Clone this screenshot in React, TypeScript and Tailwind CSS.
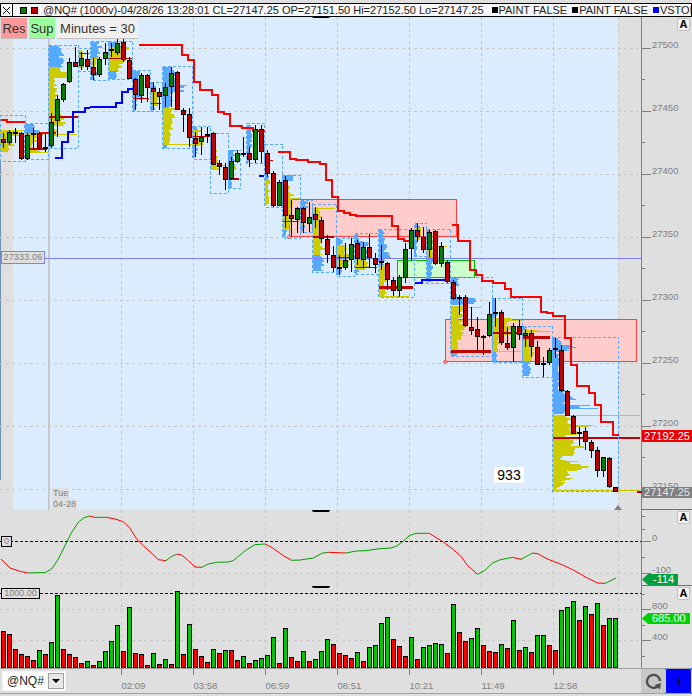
import { Fragment } from "react";

const RED = "#c00000";
const GREEN = "#008000";
const YELLOW = "#cccc00";
const BLUE = "#55aaff";

type Candle = [string, number, number, number, number];

// body top, body bottom, wick top, wick bottom, read off the chart
const rawA: Candle[] = [
  ["r", 417, 427, 400, 445], ["g", 397, 427, 390, 435], ["d", 398, 398, 385, 430], ["r", 400, 475, 395, 480],
  ["g", 405, 475, 400, 480], ["d", 402, 402, 385, 450], ["r", 400, 442, 395, 450], ["d", 445, 445, 400, 455],
  ["g", 365, 433, 340, 445], ["g", 298, 362, 285, 410], ["g", 253, 298, 250, 305], ["g", 187, 245, 175, 250],
  ["r", 187, 198, 140, 200], ["g", 175, 197, 155, 210], ["r", 178, 200, 150, 210], ["r", 202, 224, 175, 240],
  ["g", 178, 224, 170, 230], ["g", 157, 176, 130, 195], ["d", 150, 150, 130, 170], ["g", 130, 157, 118, 165],
  ["r", 127, 178, 118, 185], ["r", 181, 235, 170, 238], ["r", 238, 283, 235, 330], ["g", 226, 286, 220, 310],
  ["r", 226, 262, 222, 305], ["r", 265, 274, 245, 330], ["r", 277, 289, 265, 330], ["g", 262, 287, 250, 320],
  ["g", 220, 260, 200, 320], ["r", 217, 327, 212, 330], ["r", 331, 342, 325, 395], ["r", 343, 412, 325, 440],
  ["r", 415, 430, 395, 470], ["g", 412, 425, 380, 465], ["d", 405, 405, 380, 430], ["r", 400, 493, 395, 495],
  ["r", 490, 498, 480, 525], ["r", 500, 535, 490, 570], ["g", 483, 535, 470, 540], ["g", 460, 483, 450, 490],
  ["d", 462, 462, 410, 470], ["r", 460, 478, 440, 500], ["g", 388, 478, 375, 490], ["r", 388, 455, 375, 490],
  ["r", 460, 519, 450, 530],
];
const rawB: Candle[] = [
  ["r", 10, 105, 4, 110], ["g", 35, 105, 30, 108], ["r", 30, 134, 18, 175], ["r", 136, 146, 90, 200],
  ["g", 115, 147, 110, 190], ["r", 115, 158, 110, 188], ["g", 142, 161, 95, 185], ["r", 133, 149, 110, 175],
  ["r", 151, 206, 140, 218], ["r", 208, 254, 195, 280], ["r", 254, 290, 228, 305], ["d", 293, 293, 255, 315],
  ["g", 271, 293, 220, 300], ["g", 223, 268, 205, 305], ["r", 220, 265, 210, 285], ["g", 232, 268, 215, 295],
  ["r", 232, 262, 192, 295], ["r", 265, 284, 250, 310], ["d", 277, 277, 225, 300], ["r", 280, 328, 275, 360],
  ["r", 331, 361, 320, 378], ["g", 322, 361, 315, 380], ["g", 238, 323, 220, 340], ["g", 181, 235, 175, 270],
  ["r", 181, 199, 160, 215], ["r", 202, 238, 170, 250], ["g", 187, 238, 180, 262], ["r", 184, 281, 180, 285],
  ["g", 229, 281, 215, 290],
];
const rawC: Candle[] = [
  ["r", -23, 35, -30, 38], ["r", 37, 86, 30, 90], ["d", 84, 84, 75, 135], ["r", 82, 166, 75, 170],
  ["r", 170, 178, 110, 195], ["r", 178, 200, 140, 245], ["d", 200, 200, 195, 255], ["g", 133, 196, 95, 200],
  ["d", 128, 128, 85, 170], ["r", 127, 217, 120, 225], ["r", 220, 233, 170, 240], ["g", 169, 233, 160, 275],
  ["r", 169, 193, 150, 210], ["g", 190, 197, 180, 230], ["r", 190, 230, 180, 260], ["r", 232, 283, 212, 285],
  ["d", 281, 281, 260, 320], ["g", 241, 277, 235, 285], ["d", 236, 236, 205, 265], ["r", 241, 360, 225, 365],
  ["r", 364, 436, 360, 438], ["r", 439, 490, 435, 492], ["d", 488, 488, 470, 527], ["r", 484, 514, 470, 540],
  ["r", 517, 541, 510, 565], ["r", 541, 601, 530, 620], ["g", 562, 601, 560, 622], ["r", 565, 650, 562, 655],
  ["r", 652, 664, 650, 665],
];
const conv = (list: Candle[], o: number): Candle[] =>
  list.map(([t, a, b, c, d]) => [t, o + a / 3, o + b / 3, o + c / 3, o + d / 3]);
const candles = [...conv(rawA, 0), ...conv(rawB, 170), ...conv(rawC, 270)];

const stopsRed = [
  "1,119.5 7,119.5 7,121.7 25,121.7",
  "139,44.7 182,44.7 182,55 187.5,55 187.5,60 193.5,60 193.5,82 199.5,82 199.5,90 212,90 212,95 217.5,95 217.5,112 223.5,112 223.5,113.5 229.5,113.5 229.5,126 241.5,126 241.5,127.5 253,127.5 253,131 265,131",
  "277.5,152 289.5,152 289.5,158.7 295.5,158.7 295.5,160 307.5,160 307.5,161.7 319.5,161.7 319.5,163.5 325.5,163.5 325.5,180 331.5,180 331.5,196.7 337.5,196.7 337.5,211 343.5,211 343.5,212.7 349.5,212.7 349.5,214.7 355.5,214.7 355.5,216 391.5,216 391.5,226 397.5,226 397.5,238.7 403.5,238.7 403.5,240.7 409,240.7",
  "451.5,224.7 457.5,224.7 457.5,240.7 469.5,240.7 469.5,270 475.5,270 475.5,275 481.5,275 481.5,280.7 493,280.7 493,282.7 505,282.7 505,288.7 511,288.7 511,296.7 541,296.7 541,311.7 547,311.7 547,313.3 553,313.3 553,316 565,316 565,338.3 571,338.3 571,365 577,365 577,385.7 589,385.7 589,392.7 595,392.7 595,404.7 601,404.7 601,422 613,422 613,435 619,435",
];
const stopsBlue = [
  "55,157.7 61.7,157.7 61.7,141.7 67.7,141.7 67.7,132 73.3,132 73.3,112 85.3,112 85.3,107.7 109.3,106.7 115.7,106.7 115.7,103.3 121.7,102.7 121.7,92 127.7,92 127.7,89.3 133.3,89.3",
  "259.3,175.7 264,175.7",
  "415,282.7 421.7,282.7 421.7,279.7 445,279.7",
];

type Row = [number, number, number, number, string];
type Session = {
  x: number; w: number; t: number; b: number;
  rows: Row[];
  lines?: [number, number, string, number][];
};
const sessions: Session[] = [
  { x: 0, w: 25, t: 115, b: 161, rows: [[130, 136, 20, 22, YELLOW], [136, 146, 10, 20, YELLOW], [146, 152, 8, 12, YELLOW]], lines: [[130, 24, YELLOW, 1]] },
  { x: 24.5, w: 24, t: 123, b: 159, rows: [[124, 134, 10, 18, BLUE], [134, 146, 20, 8, YELLOW], [146, 153, 10, 20, YELLOW]], lines: [[149, 22, RED, 2], [152, 23, YELLOW, 1]] },
  { x: 48.5, w: 30, t: 45, b: 148, rows: [[46, 67, 14, 18, BLUE], [67, 72, 15, 20, YELLOW], [72, 78, 24, 26, YELLOW], [78, 112, 8, 14, YELLOW], [112, 126, 12, 24, YELLOW], [126, 136, 6, 14, YELLOW], [136, 147, 5, 6, BLUE]], lines: [[117, 29, RED, 2], [134, 28, YELLOW, 1]] },
  { x: 78.5, w: 12, t: 48, b: 71, rows: [[50, 68, 6, 7, YELLOW]], lines: [[53, 10, RED, 1]] },
  { x: 90.5, w: 18, t: 41, b: 80, rows: [[42, 58, 12, 9, BLUE], [58, 72, 10, 6, YELLOW], [72, 80, 8, 4, BLUE]] },
  { x: 108.5, w: 24, t: 41, b: 79, rows: [[42, 47, 8, 14, BLUE], [47, 71, 22, 16, YELLOW], [71, 79, 14, 8, BLUE]], lines: [[58, 23, RED, 1]] },
  { x: 132.5, w: 18, t: 70, b: 111, rows: [[71, 97, 8, 11, BLUE], [97, 100, 14, 14, YELLOW], [100, 111, 6, 3, BLUE]], lines: [[98, 16, RED, 1]] },
  { x: 150.5, w: 12, t: 82, b: 111, rows: [[83, 92, 5, 6, BLUE], [92, 106, 10, 11, YELLOW], [106, 111, 6, 3, BLUE]], lines: [[103, 10, RED, 1]] },
  { x: 162.5, w: 30, t: 66, b: 148, rows: [[67, 85, 14, 18, BLUE], [85, 92, 26, 26, BLUE], [92, 108, 12, 10, BLUE], [108, 116, 14, 16, YELLOW], [116, 144, 15, 7, YELLOW], [144, 148, 5, 5, BLUE]], lines: [[144, 30, YELLOW, 1]] },
  { x: 192.5, w: 18, t: 126, b: 159, rows: [[127, 130, 6, 8, BLUE], [130, 145, 10, 12, YELLOW], [145, 158, 7, 3, BLUE]], lines: [[136, 17, RED, 1]] },
  { x: 210.5, w: 18, t: 133, b: 193, rows: [[140, 150, 2, 3, BLUE], [150, 170, 7, 10, YELLOW]], lines: [[165, 16, YELLOW, 1]] },
  { x: 228.5, w: 12, t: 150, b: 188, rows: [[150, 165, 6, 8, BLUE], [165, 180, 8, 6, YELLOW], [180, 188, 5, 3, BLUE]], lines: [[179, 10, RED, 2]] },
  { x: 246.5, w: 18, t: 123, b: 163, rows: [[125, 140, 6, 8, BLUE], [140, 155, 6, 4, BLUE], [155, 163, 4, 3, BLUE]] },
  { x: 264.5, w: 18, t: 144, b: 207, rows: [[170, 180, 4, 6, BLUE], [180, 205, 6, 5, YELLOW]], lines: [[160, 8, RED, 1]] },
  { x: 282.5, w: 18, t: 175, b: 238, rows: [[175, 181, 15, 15, BLUE], [181, 199, 8, 12, YELLOW], [199, 230, 12, 10, YELLOW], [230, 237, 5, 4, BLUE]], lines: [[221, 16, RED, 1], [198, 17, YELLOW, 1]] },
  { x: 300.5, w: 12, t: 200, b: 232.5, rows: [[201, 210, 9, 7, BLUE], [210, 225, 4, 4, YELLOW], [225, 232, 5, 3, BLUE]] },
  { x: 312.5, w: 24, t: 204, b: 272, rows: [[209, 255, 8, 14, YELLOW], [255, 271, 10, 14, BLUE]], lines: [[208, 22, YELLOW, 1], [237, 21, RED, 2]] },
  { x: 336.5, w: 18, t: 238, b: 276, rows: [[239, 245, 8, 6, BLUE], [245, 267, 14, 12, YELLOW], [267, 275, 8, 6, BLUE]], lines: [[257, 16, RED, 1]] },
  { x: 354.5, w: 24, t: 233, b: 274, rows: [[234, 241, 5, 8, BLUE], [241, 258, 14, 16, BLUE], [258, 270, 16, 18, YELLOW], [270, 274, 5, 4, BLUE]], lines: [[267, 22, RED, 1]] },
  { x: 378.5, w: 36, t: 229, b: 297, rows: [[230, 252, 7, 9, BLUE], [252, 258, 12, 24, BLUE], [258, 265, 8, 6, BLUE], [265, 296, 12, 8, YELLOW]], lines: [[287, 34, RED, 3], [296, 30, YELLOW, 1]] },
  { x: 414.5, w: 12, t: 223, b: 256, rows: [[224, 228, 6, 8, BLUE], [228, 240, 8, 7, YELLOW], [240, 256, 3, 3, BLUE]] },
  { x: 426.5, w: 24, t: 229, b: 283, rows: [[230, 240, 5, 6, BLUE], [240, 257, 8, 10, YELLOW], [257, 282, 9, 6, BLUE]], lines: [[246, 20, YELLOW, 1]] },
  { x: 450.5, w: 42, t: 277, b: 356, rows: [[278, 286, 8, 12, BLUE], [286, 298, 6, 8, BLUE], [298, 305, 27, 26, BLUE], [306, 325, 14, 14, YELLOW], [325, 335, 20, 12, YELLOW], [335, 350, 14, 7, YELLOW], [351, 356, 12, 8, BLUE]], lines: [[307, 30, YELLOW, 1], [351, 40, RED, 3]] },
  { x: 492.5, w: 30, t: 298, b: 362, rows: [[299, 318, 3, 6, BLUE], [318, 335, 20, 26, YELLOW], [335, 351, 10, 6, YELLOW], [352, 362, 5, 4, BLUE]], lines: [[320, 29, YELLOW, 1], [333, 26, RED, 2], [351, 28, YELLOW, 1]] },
  { x: 522.5, w: 30, t: 326, b: 377, rows: [[327, 330, 5, 8, BLUE], [330, 361, 16, 12, YELLOW], [361, 376, 9, 8, BLUE]], lines: [[331, 28, YELLOW, 1], [337, 27, RED, 3]] },
  { x: 552.5, w: 66, t: 337, b: 491, rows: [
    [338, 345, 8, 10, BLUE], [345, 348, 22, 36, BLUE], [348, 351, 30, 12, BLUE], [351, 390, 7, 9, BLUE], [390, 400, 14, 30, BLUE], [400, 405, 18, 12, BLUE], [405, 409, 40, 50, BLUE], [409, 414, 18, 10, BLUE],
    [415, 425, 22, 26, YELLOW], [425, 427, 45, 45, YELLOW], [427, 433, 26, 32, YELLOW], [433, 435, 38, 38, YELLOW], [435, 446, 22, 22, YELLOW], [446, 448, 42, 42, YELLOW], [448, 456, 32, 28, YELLOW], [456, 461, 12, 16, YELLOW], [461, 466, 28, 32, YELLOW], [466, 471, 46, 40, YELLOW], [471, 478, 24, 20, YELLOW], [478, 481, 26, 14, YELLOW], [481, 487, 14, 8, YELLOW], [487, 491, 6, 4, YELLOW],
  ], lines: [[415.5, 87, YELLOW, 1], [438, 87, RED, 1.5], [490, 87, YELLOW, 1]] },
];

const volumeRaw: [number, string][] = [
  [400, "r"], [409, "r"], [454, "r"], [469, "r"], [475, "r"], [487, "r"], [457, "g"], [469, "r"], [433, "g"], [292, "g"],
  [454, "r"], [469, "r"], [478, "r"], [496, "r"], [490, "g"], [502, "r"], [490, "g"], [460, "g"], [430, "g"], [382, "g"],
  [460, "r"], [328, "g"], [466, "r"], [469, "r"], [502, "r"], [466, "g"], [499, "r"], [484, "g"], [499, "r"], [278, "g"],
  [469, "r"], [379, "g"], [454, "r"], [475, "r"], [493, "r"], [454, "g"], [466, "r"], [457, "g"], [457, "r"], [487, "r"],
  [475, "g"], [496, "r"], [487, "g"], [481, "g"], [472, "g"], [418, "g"], [496, "r"], [391, "g"], [478, "r"], [490, "r"],
  [460, "g"], [490, "r"], [484, "g"], [460, "g"], [424, "g"], [439, "r"], [466, "r"], [472, "r"], [481, "r"], [463, "g"],
  [490, "r"], [448, "g"], [442, "g"], [376, "g"], [358, "g"], [424, "r"], [445, "r"], [475, "r"], [418, "g"], [484, "r"],
  [448, "g"], [442, "g"], [436, "g"], [439, "g"], [466, "r"], [319, "g"], [403, "r"], [430, "r"], [421, "g"], [391, "g"],
  [442, "r"], [460, "r"], [463, "r"], [439, "g"], [451, "r"], [367, "g"], [457, "r"], [448, "g"], [463, "r"], [412, "g"],
  [412, "g"], [442, "r"], [457, "r"], [337, "g"], [328, "g"], [310, "g"], [367, "r"], [325, "g"], [349, "r"], [316, "g"],
  [382, "r"], [361, "g"], [361, "g"],
];

const curveA = [[3, 180], [30, 207], [60, 217], [85, 222], [110, 221], [135, 221], [155, 210], [175, 180], [195, 140], [215, 100], [235, 70], [250, 57], [268, 51], [285, 55], [320, 55], [345, 60], [370, 68], [390, 88], [410, 120], [430, 140], [450, 158], [475, 182], [498, 185], [515, 172], [530, 166], [545, 168], [565, 185], [585, 204], [605, 205], [625, 195], [650, 190], [685, 189], [700, 185], [720, 168], [740, 152], [765, 137], [795, 135], [815, 145], [850, 170], [875, 184], [900, 183], [940, 177], [965, 163], [985, 160], [1038, 162]];
const curveB = [[30, 156], [60, 155], [100, 149], [135, 147], [150, 142], [170, 128], [190, 110], [210, 103], [250, 103], [290, 128], [320, 150], [345, 172], [365, 200], [395, 226], [415, 215], [440, 192], [460, 183], [500, 175], [525, 181], [545, 170], [560, 162], [575, 164], [600, 178], [630, 190], [650, 198], [680, 212], [720, 235], [755, 252], [778, 253], [810, 237]];
const curve = [...curveA.map(([x, y]) => [x / 3, 500 + y / 3]), ...curveB.map(([x, y]) => [346 + x / 3, 500 + y / 3])];

const gridX = [121.5, 193.5, 265.5, 337.5, 409.5, 481.5, 553.5, 618.5];
const times = ["02:09", "03:58", "06:59", "08:51", "10:21", "11:49", "12:58"];
const priceLevels: [number, string][] = [[48, "27500"], [111, "27450"], [174, "27400"], [237, "27350"], [300, "27300"], [363, "27250"], [426, "27200"], [489, "27150"]];

function GridV({ top, bottom }: { top: number; bottom: number }) {
  return (
    <>
      {gridX.map((x) => (
        <line key={x} x1={x} x2={x} y1={top} y2={bottom} stroke="#c8c8c8" strokeDasharray="3 3" />
      ))}
    </>
  );
}

function Profile({ s }: { s: Session }) {
  const bars: { y: number; w: number; c: string }[] = [];
  s.rows.forEach(([y0, y1, w0, w1, c]) => {
    for (let y = Math.round(y0); y < y1; y++) {
      const f = (y - y0) / Math.max(1, y1 - y0);
      // rough spikes so a profile doesn't read as a smooth wedge
      const n = Math.abs(Math.sin(Math.floor(y / 2) * 12.9898 + s.x) * 437.5453) % 1;
      bars.push({ y, w: (w0 + (w1 - w0) * f) * (0.55 + 0.45 * n), c });
    }
  });
  return (
    <g shapeRendering="crispEdges">
      {bars.map((b) => (
        <rect key={b.y} x={s.x} y={b.y} width={b.w} height={1} fill={b.c} />
      ))}
      {s.lines?.map(([y, len, c, h], i) => (
        <rect key={i} x={s.x} y={y - h / 2} width={len} height={h} fill={c} />
      ))}
      <rect x={s.x} y={s.t} width={s.w} height={s.b - s.t} fill="none" stroke={BLUE} strokeDasharray="3 2" />
    </g>
  );
}

function Candles() {
  return (
    <g shapeRendering="crispEdges">
      {candles.map(([t, top, bot, wt, wb], k) => {
        const cx = 3.5 + 6 * k;
        return (
          <Fragment key={k}>
            <line x1={cx} x2={cx} y1={wt} y2={wb} stroke="#000" />
            {t === "d" ? (
              <rect x={cx - 2.5} y={top - 1} width={5} height={2} fill="#000" />
            ) : (
              <rect x={cx - 2} y={Math.round(top) + 0.5} width={4} height={Math.max(1, Math.round(bot - top))} fill={t === "r" ? RED : GREEN} stroke="#000" />
            )}
          </Fragment>
        );
      })}
    </g>
  );
}

function PriceChart() {
  return (
    <svg width={641} height={493} viewBox="0 17 641 493" className="block">
      <rect x={0} y={17} width={641} height={493} fill="#dbecff" />
      <rect x={0} y={17} width={13} height={493} fill="#dfdfdf" />
      <rect x={618} y={17} width={23} height={493} fill="#dfdfdf" />
      <rect x={0} y={160} width={1} height={320} fill="#6f8fb8" />
      <GridV top={17} bottom={510} />
      {priceLevels.map(([y]) => (
        <line key={y} x1={0} x2={641} y1={y + 0.5} y2={y + 0.5} stroke="#c8c8c8" strokeDasharray="3 3" />
      ))}
      <rect x={48} y={38} width={2} height={472} fill="#c8c8c8" />
      <rect x={289.5} y={199.5} width={167} height={37} fill="#ffcccc" stroke="#ff4040" />
      <rect x={445.5} y={319.5} width={191} height={42} fill="#ffcccc" stroke="#ff4040" />
      <rect x={397.5} y={260.5} width={77} height={17} fill="#ccffcc" stroke="#00c000" />
      <circle cx={289} cy={237} r={1.5} fill="#ffcccc" stroke="#ff4040" />
      <circle cx={445} cy={362} r={1.5} fill="#ffcccc" stroke="#ff4040" />
      {sessions.map((s) => (
        <Profile key={s.x} s={s} />
      ))}
      <rect x={39} y={132} width={17} height={2} fill="#ff0000" />
      <line x1={0} x2={641} y1={258.5} y2={258.5} stroke="#8080ff" />
      {stopsRed.map((p, i) => (
        <polyline key={i} points={p} fill="none" stroke="#ff0000" strokeWidth={2} shapeRendering="crispEdges" />
      ))}
      {stopsBlue.map((p, i) => (
        <polyline key={i} points={p} fill="none" stroke="#0000ff" strokeWidth={2} shapeRendering="crispEdges" />
      ))}
      <Candles />
      <polygon points="614,510 618,505 622,510" fill="#808080" />
    </svg>
  );
}

function IndicatorChart() {
  const segs = curve.slice(1).map((p, i) => ({ a: curve[i], b: p }));
  return (
    <svg width={641} height={76} viewBox="0 511 641 76" className="block">
      <rect x={0} y={511} width={641} height={76} fill="#dfdfdf" />
      <GridV top={511} bottom={587} />
      <line x1={0} x2={641} y1={574.5} y2={574.5} stroke="#c8c8c8" strokeDasharray="3 3" />
      <line x1={0} x2={641} y1={542.5} y2={542.5} stroke="#000" strokeDasharray="3 2" />
      {segs.map(({ a, b }, i) => (
        <line key={i} x1={a[0]} y1={a[1]} x2={b[0]} y2={b[1]} stroke={b[1] <= a[1] ? "#00a000" : "#ff0000"} />
      ))}
    </svg>
  );
}

function VolumeChart() {
  return (
    <svg width={641} height={82} viewBox="0 588 641 82" className="block">
      <rect x={0} y={588} width={641} height={82} fill="#dfdfdf" />
      <GridV top={588} bottom={670} />
      <line x1={0} x2={641} y1={611.5} y2={611.5} stroke="#c8c8c8" strokeDasharray="3 3" />
      <line x1={0} x2={641} y1={642.5} y2={642.5} stroke="#c8c8c8" strokeDasharray="3 3" />
      <line x1={0} x2={641} y1={595.5} y2={595.5} stroke="#000" strokeDasharray="3 2" />
      <g shapeRendering="crispEdges">
        {volumeRaw.map(([z, c], k) => {
          const top = Math.round(500 + z / 3);
          return <rect key={k} x={1.5 + 6 * k} y={top + 0.5} width={4} height={669 - top} fill={c === "r" ? "#ff0000" : "#00c800"} stroke="#000" />;
        })}
      </g>
    </svg>
  );
}

function AxisLabels({ top, height, major, minor, labels }: { top: number; height: number; major: number[]; minor: number[]; labels: [number, string][] }) {
  return (
    <svg width={51} height={height} viewBox={`641 ${top} 51 ${height}`} className="block">
      <line x1={641.5} x2={641.5} y1={top} y2={top + height} stroke="#808080" />
      {major.map((y) => (
        <line key={y} x1={641} x2={651} y1={y + 0.5} y2={y + 0.5} stroke="#808080" />
      ))}
      {minor.map((y) => (
        <line key={y} x1={641} x2={645} y1={y + 0.5} y2={y + 0.5} stroke="#808080" />
      ))}
      {labels.map(([y, t]) => (
        <text key={t} x={652} y={y} fontSize={9.5} fill="#808080">{t}</text>
      ))}
    </svg>
  );
}

function AutoButton() {
  return (
    <div className="absolute right-[2px] top-[1px] flex h-[13px] w-[13px] items-center justify-center rounded-[2px] border border-[#c0c0c0] bg-[#f4f4f4] text-[11px] leading-none font-bold text-black">
      A
    </div>
  );
}

function TopMark({ top }: { top: string }) {
  return <div className={`absolute left-[312px] h-[2px] w-[18px] rounded-b-sm bg-black ${top}`} />;
}

export default function App() {
  return (
    <div className="relative flex h-[696px] w-[692px] flex-col overflow-hidden bg-[#dfdfdf] [font-family:'Liberation_Sans',sans-serif]">
      {/* title bar */}
      <div className="flex h-[17px] flex-col justify-end bg-[#dfdfdf]">
        <div className="flex h-[14px] items-center gap-[4px] overflow-hidden whitespace-nowrap border-x border-y border-black bg-[#f7f7f7] text-[11px] leading-none text-[#222]">
          <div className="flex h-[12px] w-[12px] shrink-0 items-center justify-center border-r border-black">
            <svg width="9" height="9" viewBox="0 0 9 9"><path d="M1 1 8 8M8 1 1 8" stroke="#000" strokeWidth="1" /></svg>
          </div>
          <span className="ml-[3px] h-[7px] w-[7px] shrink-0 border border-black bg-[#008000]" />
          <span className="h-[7px] w-[7px] shrink-0 border border-black bg-[#c00000]" />
          <span className="ml-[1px] shrink-0">@NQ# (1000v)-04/28/26 13:28:01 CL=27147.25 OP=27151.50 Hi=27152.50 Lo=27147.25</span>
          <span className="ml-[4px] flex shrink-0 items-center"><i className="mr-[1px] h-[6px] w-[6px] bg-black" />PAINT FALSE</span>
          <span className="ml-[1px] flex shrink-0 items-center"><i className="mr-[1px] h-[6px] w-[6px] bg-black" />PAINT FALSE</span>
          <span className="ml-[1px] flex shrink-0 items-center"><i className="mr-[1px] h-[6px] w-[6px] bg-[#0000ff]" />VSTOP=</span>
        </div>
      </div>

      {/* price pane */}
      <div className="relative flex h-[493px] border-b border-[#707070]">
        <div className="w-[641px] shrink-0"><PriceChart /></div>
        <AxisLabels
          top={17}
          height={493}
          major={priceLevels.map(([y]) => y)}
          minor={priceLevels.map(([y]) => y + 31)}
          labels={priceLevels.map(([y, t]) => [y, t])}
        />
        <TopMark top="top-[-1px]" />
        <AutoButton />
        <div className="absolute left-[1px] top-[1px] flex h-[21px] text-[13px] leading-none text-[#333]">
          <div className="flex w-[26px] items-center justify-center border-b border-[#c0c0c0] bg-[#ff9999]">Res</div>
          <div className="ml-[2px] flex w-[26px] items-center justify-center border-b border-[#c0c0c0] bg-[#99ff99]">Sup</div>
          <div className="ml-[2px] flex w-[81px] items-center justify-center border-b border-[#c0c0c0] bg-[#f0f0f0]">Minutes = 30</div>
        </div>
        <div className="absolute left-[1px] top-[234px] h-[13px] w-[44px] border border-[#8080ff] bg-[#dfdfdf] text-center text-[9px] leading-[11px] tracking-[0.02em] text-[#808080]">27333.06</div>
        <div className="absolute left-[52px] top-[471px] flex flex-col items-start text-[9px] leading-[11px] text-[#808080]">
          <span className="bg-[#dfdfdf] px-[1px]">Tue</span>
          <span className="bg-[#dfdfdf] px-[1px]">04-28</span>
        </div>
        <div className="absolute left-[494px] top-[450px] flex h-[16px] w-[30px] items-center justify-center bg-white text-[14px] leading-none text-black">933</div>
        <div className="absolute left-[642px] top-[413px] flex h-[12px] w-[50px] items-center justify-center bg-[#ee0000] text-[11px] leading-none text-white">27192.25</div>
        <div className="absolute left-[637px] top-[474px] h-[2px] w-[5px] bg-[#c00000]" />
        <div className="absolute left-[642px] top-[470px] flex h-[11px] w-[50px] items-center justify-center bg-[#808080] text-[11px] leading-none text-[#e8e8e8]">27147.25</div>
      </div>

      {/* indicator pane */}
      <div className="relative flex h-[76px] border-b border-[#707070]">
        <div className="w-[641px] shrink-0"><IndicatorChart /></div>
        <AxisLabels top={511} height={76} major={[542, 574]} minor={[517, 530, 558]} labels={[[542, "0"], [574, "-100"]]} />
        <TopMark top="top-0" />
        <AutoButton />
        <div className="absolute left-[1px] top-[26px] h-[11px] w-[11px] border border-black bg-[#dfdfdf] text-center text-[9px] leading-[9px] text-[#808080]">0</div>
        <svg width={36} height={11} viewBox="0 0 36 11" className="absolute left-[642px] top-[64px]"><polygon points="0,5.5 6,0 36,0 36,11 6,11" fill="#00a040" /></svg>
        <span className="absolute left-[653px] top-[64px] text-[11px] leading-[11px] text-white">-114</span>
      </div>

      {/* volume pane */}
      <div className="relative flex h-[82px]">
        <div className="w-[641px] shrink-0"><VolumeChart /></div>
        <AxisLabels top={588} height={82} major={[611, 642]} minor={[596, 627, 658]} labels={[[611, "800"], [642, "400"]]} />
        <TopMark top="top-0" />
        <AutoButton />
        <div className="absolute left-[1px] top-[2px] h-[11px] w-[39px] border border-black bg-[#dfdfdf] text-center text-[9px] leading-[9px] text-[#808080]">1000.00</div>
        <svg width={48} height={11} viewBox="0 0 48 11" className="absolute left-[642px] top-[27px]"><polygon points="0,5.5 6,0 48,0 48,11 6,11" fill="#00d000" /></svg>
        <span className="absolute left-[652px] top-[27px] text-[11px] leading-[11px] text-white">685.00</span>
      </div>

      {/* time axis */}
      <div className="relative h-[25px] border-t border-[#a0a0a0]">
        <svg width={641} height={24} className="block">
          {gridX.slice(0, 7).map((x) => (
            <line key={x} x1={x} x2={x} y1={0} y2={6} stroke="#808080" />
          ))}
          {times.map((t, i) => (
            <text key={t} x={gridX[i]} y={20} fontSize={9.5} fill="#808080">{t}</text>
          ))}
        </svg>
        <div className="absolute left-[2px] top-[2px] flex h-[20px] w-[64px] items-center justify-between border border-[#f4f4f4] bg-white pl-[4px] pr-[1px] text-[12px] leading-none text-[#222]">
          @NQ#
          <span className="flex h-[16px] w-[16px] items-center justify-center border border-[#a0a0a0] bg-[#e8e8e8]">
            <svg width="8" height="4" viewBox="0 0 8 4"><polygon points="0,0 8,0 4,4" fill="#000" /></svg>
          </span>
        </div>
        <div className="absolute left-[641px] top-0 flex h-[24px] w-[25px] items-center justify-center bg-[#c8c8c8]">
          <svg width="18" height="18" viewBox="0 0 18 18">
            <path d="M12.5 14.5A6.5 6.5 0 1 1 15 9" fill="none" stroke="#505050" strokeWidth="2.4" />
            <polygon points="9.5,13 16,11 15,17.5" fill="#505050" />
          </svg>
        </div>
        <div className="absolute left-[666px] top-0 flex h-[24px] w-[25px] items-center justify-center bg-[#0000ff] text-[14px] leading-none text-black">
          +
          <i className="absolute left-[-1px] top-[-1px] h-[2px] w-[2px] bg-[#4080ff]" />
          <i className="absolute right-[-1px] top-[-1px] h-[2px] w-[2px] bg-[#4080ff]" />
          <i className="absolute bottom-[-1px] left-[-1px] h-[2px] w-[2px] bg-[#4080ff]" />
          <i className="absolute bottom-[-1px] right-[-1px] h-[2px] w-[2px] bg-[#4080ff]" />
        </div>
      </div>
      <div className="h-[1px] bg-[#a0a0a0]" />
    </div>
  );
}
